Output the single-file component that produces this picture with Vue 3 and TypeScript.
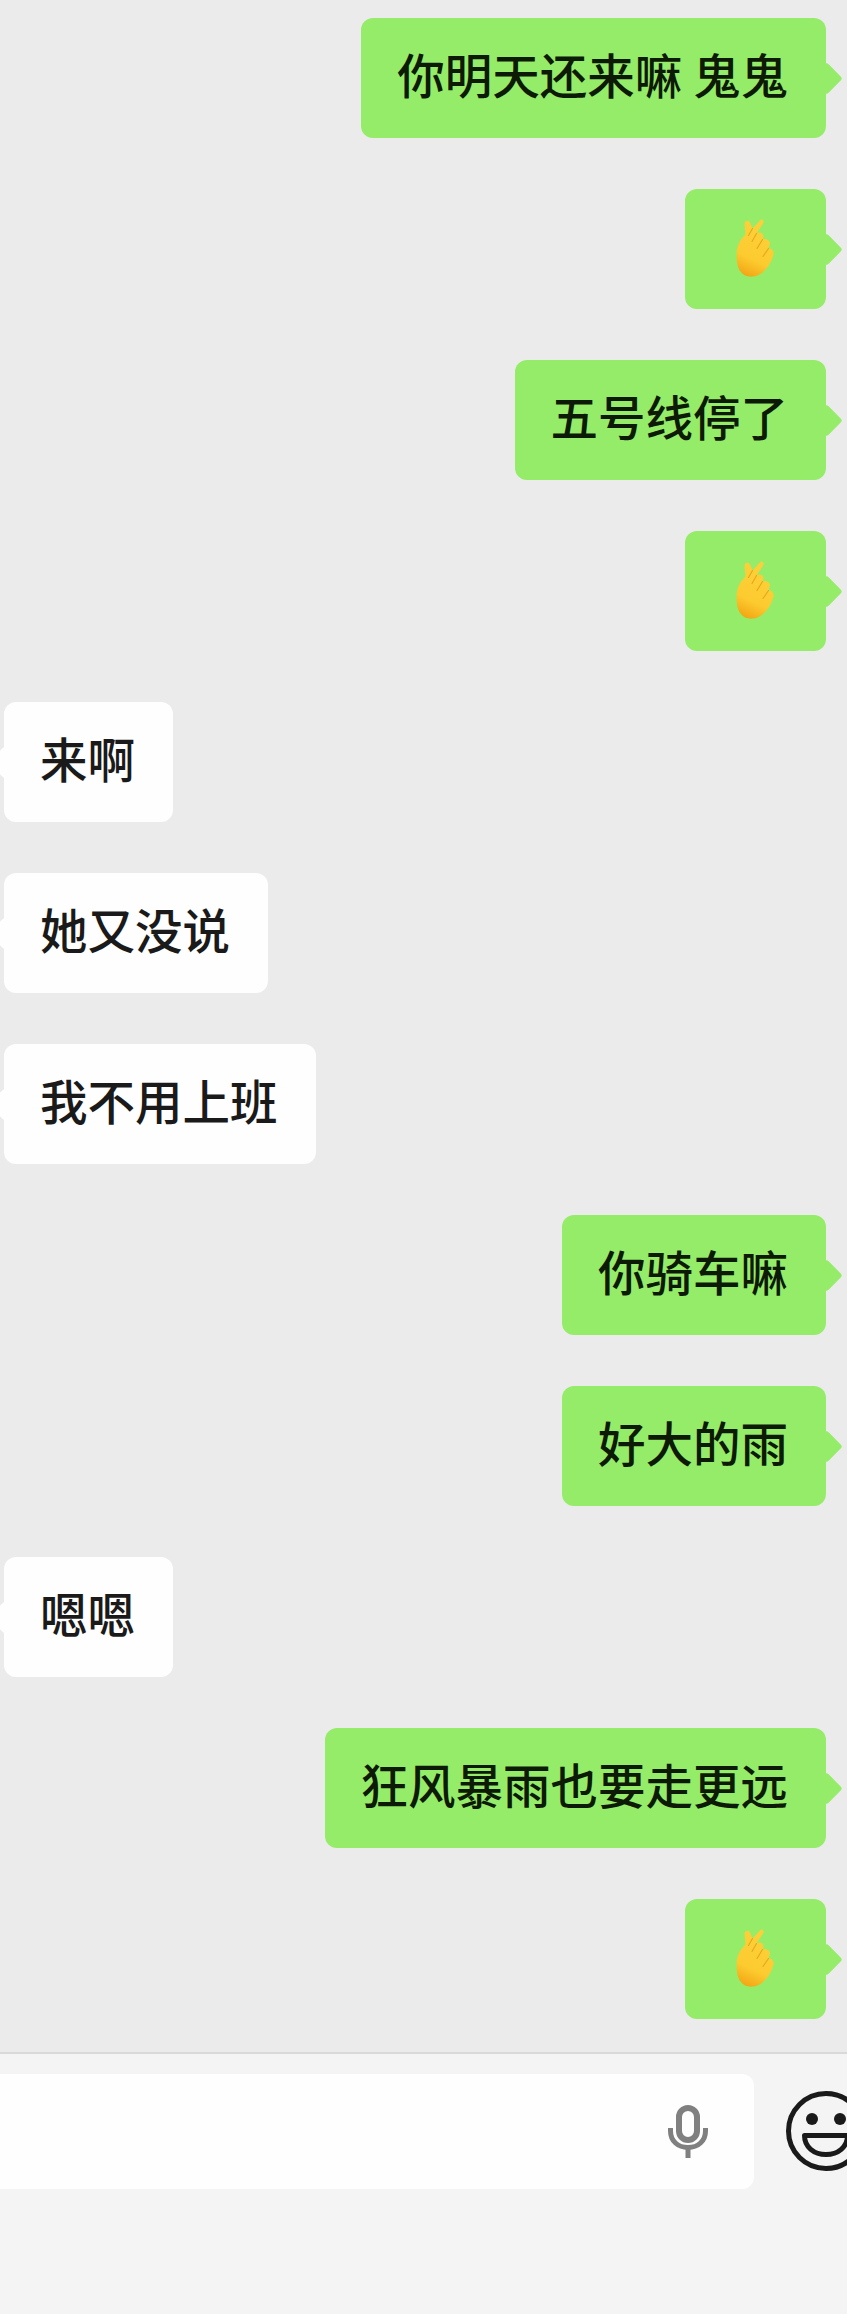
<script setup lang="ts">
interface Message {
  id: number;
  side: "me" | "them";
  text?: string;
}

const messages: Message[] = [
  { id: 1, side: "me", text: "你明天还来嘛 鬼鬼" },
  { id: 2, side: "me" },
  { id: 3, side: "me", text: "五号线停了" },
  { id: 4, side: "me" },
  { id: 5, side: "them", text: "来啊" },
  { id: 6, side: "them", text: "她又没说" },
  { id: 7, side: "them", text: "我不用上班" },
  { id: 8, side: "me", text: "你骑车嘛" },
  { id: 9, side: "me", text: "好大的雨" },
  { id: 10, side: "them", text: "嗯嗯" },
  { id: 11, side: "me", text: "狂风暴雨也要走更远" },
  { id: 12, side: "me" },
];
</script>

<template>
  <div class="page">
    <main class="chat">
      <div v-for="m in messages" :key="m.id" class="row" :class="m.side">
        <div class="bubble">
          <span v-if="m.text" class="text">{{ m.text }}</span>
          <svg v-else class="emoji" viewBox="4.5 11.5 67 67">
            <defs>
              <linearGradient :id="'skin' + m.id" x1="0.65" y1="0" x2="0.35" y2="1">
                <stop offset="0" stop-color="#fdd03a" />
                <stop offset="0.7" stop-color="#fccb30" />
                <stop offset="1" stop-color="#f3a815" />
              </linearGradient>
            </defs>
            <path
              :fill="'url(#skin' + m.id + ')'"
              d="M20 50C20 42 23 36 29 30L28 20C27.5 16 32 15 33.5 18L36 24L43.5 16C46 13.5 48 16.5 46.5 19L40 29C43 27 47 28.5 47 32L46 35C49 33.5 53.5 35.5 53.5 39L52 44C55 43.5 58 46.5 57 50C55 58 50 66 43 70C36 73.5 28 73 24 67C21 63 20 57 20 50Z"
            />
            <g fill="none" stroke="#e6a61c" stroke-width="1.1" stroke-linecap="round">
              <path d="M36 24L32 31" />
              <path d="M40 29L35.5 37" />
              <path d="M46 35L40.5 44" />
              <path d="M52 44L46.5 52" />
            </g>
          </svg>
        </div>
      </div>
    </main>

    <footer class="composer">
      <div class="input">
        <svg class="mic" viewBox="0 0 48 53" fill="none" stroke="#808080">
          <rect x="15" y="3" width="18" height="32" rx="9" stroke-width="6" />
          <path d="M6.5 23V26C6.5 36 14 42.5 24 42.5C34 42.5 41.5 36 41.5 26V23" stroke-width="5" />
          <path d="M24 42V53" stroke-width="5" />
        </svg>
      </div>
      <svg class="smile" viewBox="0 0 80 80" fill="none" stroke="#1a1a1a">
        <circle cx="40" cy="40" r="37.5" stroke-width="5" />
        <circle cx="26" cy="28" r="6" fill="#1a1a1a" stroke="none" />
        <circle cx="54" cy="28" r="6" fill="#1a1a1a" stroke="none" />
        <path d="M18.5 44.5H61.5C61.5 56 52 63.5 40 63.5C28 63.5 18.5 56 18.5 44.5Z" stroke-width="5" stroke-linejoin="round" />
      </svg>
    </footer>
  </div>
</template>

<style>
html,
body {
  margin: 0;
  background: #ebebeb;
}
</style>

<style scoped>
.page {
  width: 847px;
  height: 2314px;
  overflow: hidden;
  display: flex;
  flex-direction: column;
  background: #ebebeb;
  font-family: "Noto Sans CJK SC", "Liberation Sans", sans-serif;
}

.chat {
  flex: 1;
  display: flex;
  flex-direction: column;
  gap: 51px;
  padding: 18px 21px 0 4px;
}

.row {
  display: flex;
}

.row.me {
  justify-content: flex-end;
}

.bubble {
  position: relative;
  height: 120px;
  box-sizing: border-box;
  padding: 0 38px 0 36px;
  display: flex;
  align-items: center;
  border-radius: 12px;
  background: #fefefe;
  color: #1a1a1a;
}

.me .bubble {
  background: #95ec69;
  color: #0c1a06;
}

.bubble::after {
  content: "";
  position: absolute;
  top: 48.5px;
  width: 23px;
  height: 23px;
  background: inherit;
  border-radius: 3px;
  transform: rotate(45deg);
}

.me .bubble::after {
  right: -11.5px;
}

.them .bubble::after {
  left: -11.5px;
}

.text {
  position: relative;
  z-index: 1;
  margin-bottom: 8px;
  font-size: 47.5px;
  font-weight: 500;
  line-height: 1;
  white-space: pre;
}

.emoji {
  width: 67px;
  height: 67px;
  display: block;
}

.composer {
  height: 262px;
  box-sizing: border-box;
  flex: none;
  display: flex;
  align-items: flex-start;
  padding-top: 20px;
  border-top: 2px solid #d9d9d9;
  background: #f4f4f4;
}

.input {
  flex: none;
  width: 754px;
  height: 115px;
  box-sizing: border-box;
  padding-right: 42px;
  display: flex;
  align-items: center;
  justify-content: flex-end;
  background: #fefefe;
  border-radius: 0 12px 12px 0;
}

.mic {
  width: 48px;
  height: 53px;
  display: block;
}

.smile {
  flex: none;
  width: 80px;
  height: 80px;
  margin: 17px 0 0 32px;
}
</style>
